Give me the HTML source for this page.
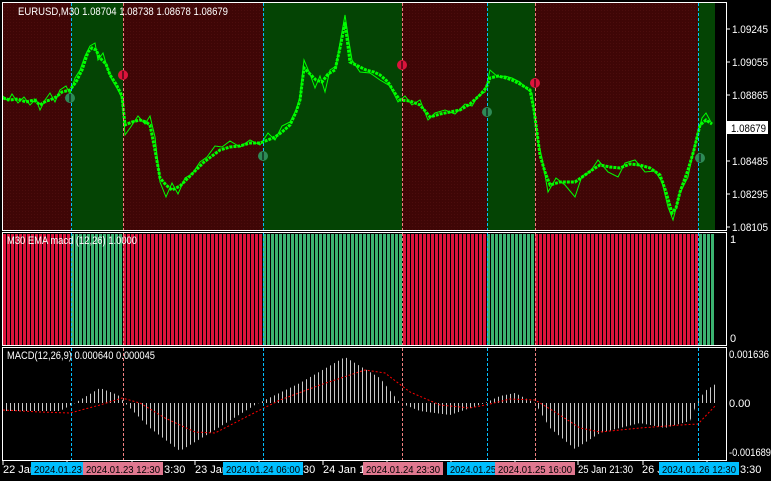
<!DOCTYPE html>
<html><head><meta charset="utf-8"><style>
html,body{margin:0;padding:0;background:#000;}
body{width:771px;height:481px;overflow:hidden;position:relative;}
svg{position:absolute;left:0;top:0;}
</style></head><body>
<svg width="771" height="481" xmlns="http://www.w3.org/2000/svg" font-family="Liberation Sans, sans-serif" font-size="11">
<defs>
<pattern id="dr" width="3" height="3" patternUnits="userSpaceOnUse"><rect width="3" height="3" fill="#3f0606"/><rect x="1" y="1" width="1" height="1" fill="#4c0d0d"/></pattern>
<pattern id="rb" x="3" width="4" height="10" patternUnits="userSpaceOnUse"><rect width="3" height="10" fill="#dc143c"/><rect x="3" width="1" height="10" fill="#000"/></pattern>
<pattern id="gb" x="3" width="4" height="10" patternUnits="userSpaceOnUse"><rect width="3" height="10" fill="#3cb371"/><rect x="3" width="1" height="10" fill="#000"/></pattern>
<pattern id="hb" x="1" width="4" height="10" patternUnits="userSpaceOnUse"><rect x="1" width="1" height="10" fill="#c8c8c8"/></pattern>
</defs>
<rect x="3" y="3" width="722" height="227" fill="#000"/>
<rect x="3" y="3" width="68" height="227" fill="url(#dr)"/>
<rect x="71" y="3" width="52" height="227" fill="#044404"/>
<rect x="123" y="3" width="140" height="227" fill="url(#dr)"/>
<rect x="263" y="3" width="139" height="227" fill="#044404"/>
<rect x="402" y="3" width="85" height="227" fill="url(#dr)"/>
<rect x="487" y="3" width="48" height="227" fill="#044404"/>
<rect x="535" y="3" width="163" height="227" fill="url(#dr)"/>
<rect x="698" y="3" width="17" height="227" fill="#044404"/>
<!-- price wicks -->
<polyline fill="none" stroke="#00ff00" stroke-width="1" points="3,96 8,101 12,94 18,103 24,97 30,105 36,99 40,110 45,100 50,93 55,102 60,90 66,86 70,94 75,78 80,70 85,56 90,46 95,43 98,60 103,53 108,70 112,80 118,90 122,98 125,135 130,128 138,116 145,124 150,116 155,137 160,182 166,197 172,183 178,194 185,178 192,174 200,162 207,157 215,146 222,147 230,141 240,147 250,140 260,145 268,133 275,140 282,126 290,122 296,110 300,97 304,60 310,74 315,88 320,76 325,92 330,70 336,66 340,43 345,15 349,42 352,60 360,72 370,73 380,80 390,86 398,102 405,96 412,105 420,100 428,120 435,113 445,110 455,114 465,104 472,106 478,96 485,92 490,70 498,77 505,76 512,78 520,82 528,90 532,93 538,142 542,158 548,192 556,178 565,185 575,197 582,176 590,172 598,160 608,172 618,177 625,163 635,160 645,172 655,171 662,182 668,207 673,220 680,193 688,177 694,148 698,133 702,118 706,113 712,124"/>
<!-- bodies -->
<polyline fill="none" stroke="#00ff00" stroke-width="3" stroke-dasharray="3,1" points="3,98 10,100 18,99 26,102 34,100 40,105 46,101 50,100 56,97 62,92 70,90 76,82 82,70 88,52 92,48 96,50 100,58 106,64 110,75 116,84 122,96 125,125 132,122 140,120 146,122 150,125 155,150 160,178 166,185 172,190 180,186 188,178 196,170 204,162 212,156 220,150 230,147 240,146 250,143 260,143 268,140 275,137 282,132 290,125 296,112 300,100 304,68 310,74 316,80 322,82 328,74 335,70 340,48 345,22 350,62 358,66 366,70 374,72 380,75 388,82 394,92 400,100 410,101 420,105 426,112 430,117 440,114 450,112 460,110 470,104 480,95 486,88 490,78 498,76 506,78 512,80 520,84 530,90 534,110 540,155 545,172 550,185 560,182 575,182 585,175 592,170 600,165 610,167 620,168 630,164 640,165 650,168 660,175 666,192 672,213 676,208 680,192 688,170 694,150 700,125 706,120 712,124"/>
<rect x="3" y="234" width="712" height="111" fill="#000"/>
<rect x="3" y="234" width="68" height="111" fill="url(#rb)"/>
<rect x="71" y="234" width="52" height="111" fill="url(#gb)"/>
<rect x="123" y="234" width="140" height="111" fill="url(#rb)"/>
<rect x="263" y="234" width="139" height="111" fill="url(#gb)"/>
<rect x="402" y="234" width="85" height="111" fill="url(#rb)"/>
<rect x="487" y="234" width="48" height="111" fill="url(#gb)"/>
<rect x="535" y="234" width="163" height="111" fill="url(#rb)"/>
<rect x="698" y="234" width="17" height="111" fill="url(#gb)"/>
<polygon fill="url(#hb)" fill-rule="evenodd" points="3,411 60,411 75,403 100,388 118,395 125,403 150,428 180,451 210,433 255,405 265,400 300,383 345,357 380,378 400,403 420,411 450,415 485,403 500,396 515,393 535,403 550,428 575,449 600,433 640,423 665,428 690,421 697,403 705,391 717,383 717,403 3,403"/>
<polyline fill="none" stroke="#ff0000" stroke-width="1" stroke-dasharray="2,2" points="3,410 40,412 70,413 100,405 122,398 140,403 165,418 195,432 215,433 250,415 280,400 320,385 365,370 385,373 410,392 440,405 470,408 490,404 510,399 535,400 555,412 580,428 600,432 640,428 680,425 698,424 716,405"/>
<g stroke-width="1" stroke-dasharray="3,2">
<line x1="71.5" y1="3" x2="71.5" y2="460" stroke="#00bfff"/>
<line x1="123.5" y1="3" x2="123.5" y2="460" stroke="#f08080"/>
<line x1="263.5" y1="3" x2="263.5" y2="460" stroke="#00bfff"/>
<line x1="402.5" y1="3" x2="402.5" y2="460" stroke="#f08080"/>
<line x1="487.5" y1="3" x2="487.5" y2="460" stroke="#00bfff"/>
<line x1="535.5" y1="3" x2="535.5" y2="460" stroke="#f08080"/>
<line x1="698.5" y1="3" x2="698.5" y2="460" stroke="#00bfff"/>
</g>
<g fill="none" stroke="#fff">
<rect x="2.5" y="2.5" width="724" height="228"/>
<rect x="2.5" y="232.5" width="724" height="113"/>
<rect x="2.5" y="347.5" width="724" height="113"/>
</g>
<g>
<circle cx="70" cy="98" r="5" fill="#2e8b57"/><circle cx="263" cy="156" r="5" fill="#2e8b57"/><circle cx="487" cy="112" r="5" fill="#2e8b57"/><circle cx="700" cy="158" r="5" fill="#2e8b57"/>
<circle cx="123" cy="75" r="5" fill="#dc143c"/><circle cx="402" cy="65" r="5" fill="#dc143c"/><circle cx="535" cy="83" r="5" fill="#dc143c"/>
</g>
<g stroke="#000" stroke-width="1">
<line x1="70" y1="94" x2="70" y2="102"/><line x1="263" y1="152" x2="263" y2="160"/><line x1="487" y1="108" x2="487" y2="116"/><line x1="700" y1="154" x2="700" y2="162"/>
<line x1="123" y1="71" x2="123" y2="79"/><line x1="402" y1="61" x2="402" y2="69"/><line x1="535" y1="79" x2="535" y2="87"/>
</g>
<g fill="#fff">
<text x="18" y="15" textLength="210" lengthAdjust="spacingAndGlyphs">EURUSD,M30  1.08704 1.08738 1.08678 1.08679</text>
<text x="7" y="244" textLength="130" lengthAdjust="spacingAndGlyphs">M30 EMA macd (12,26) 1.0000</text>
<text x="7" y="359" textLength="148" lengthAdjust="spacingAndGlyphs">MACD(12,26,9) 0.000640 0.000045</text>
<text x="732" y="33" textLength="36" lengthAdjust="spacingAndGlyphs">1.09245</text><text x="732" y="66" textLength="36" lengthAdjust="spacingAndGlyphs">1.09055</text><text x="732" y="99" textLength="36" lengthAdjust="spacingAndGlyphs">1.08865</text>
<text x="732" y="165" textLength="36" lengthAdjust="spacingAndGlyphs">1.08485</text><text x="732" y="198" textLength="36" lengthAdjust="spacingAndGlyphs">1.08295</text><text x="732" y="231" textLength="36" lengthAdjust="spacingAndGlyphs">1.08105</text>
<text x="730" y="243">1</text><text x="730" y="342">0</text>
<text x="729" y="358" textLength="40" lengthAdjust="spacingAndGlyphs">0.001636</text>
<text x="729" y="407">0.00</text>
<text x="729" y="456" textLength="42" lengthAdjust="spacingAndGlyphs">-0.001689</text>
</g>
<g stroke="#fff"><line x1="727" y1="29" x2="730" y2="29"/><line x1="727" y1="62" x2="730" y2="62"/><line x1="727" y1="95" x2="730" y2="95"/><line x1="727" y1="161" x2="730" y2="161"/><line x1="727" y1="194" x2="730" y2="194"/><line x1="727" y1="227" x2="730" y2="227"/></g>
<rect x="727" y="121" width="41" height="13" fill="#fff"/>
<text x="731" y="132" fill="#000" textLength="35" lengthAdjust="spacingAndGlyphs">1.08679</text>
<g stroke="#fff"><line x1="3" y1="461" x2="3" y2="465"/><line x1="67" y1="461" x2="67" y2="465"/><line x1="132" y1="461" x2="132" y2="465"/><line x1="195" y1="461" x2="195" y2="465"/><line x1="259" y1="461" x2="259" y2="465"/><line x1="323" y1="461" x2="323" y2="465"/><line x1="387" y1="461" x2="387" y2="465"/><line x1="451" y1="461" x2="451" y2="465"/><line x1="515" y1="461" x2="515" y2="465"/><line x1="578" y1="461" x2="578" y2="465"/><line x1="643" y1="461" x2="643" y2="465"/><line x1="707" y1="461" x2="707" y2="465"/></g>
<g fill="#fff">
<text x="3" y="473">22 Jan</text><text x="164" y="473">3:30</text><text x="195" y="473">23 Jan</text><text x="303" y="473">30</text>
<text x="323" y="473">24 Jan 13</text><text x="578" y="473" textLength="55" lengthAdjust="spacingAndGlyphs">25 Jan 21:30</text><text x="642" y="473">26 J</text><text x="740" y="473">3:30</text>
</g>
<g font-size="10.5">
<rect x="31" y="462" width="52" height="13" fill="#00bfff"/><text x="34" y="473" textLength="48" lengthAdjust="spacingAndGlyphs">2024.01.23</text>
<rect x="83" y="462" width="80" height="13" fill="#e07890"/><text x="86" y="473" textLength="74" lengthAdjust="spacingAndGlyphs">2024.01.23 12:30</text>
<rect x="223" y="462" width="80" height="13" fill="#00bfff"/><text x="226" y="473" textLength="74" lengthAdjust="spacingAndGlyphs">2024.01.24 06:00</text>
<rect x="363" y="462" width="80" height="13" fill="#e07890"/><text x="366" y="473" textLength="74" lengthAdjust="spacingAndGlyphs">2024.01.24 23:30</text>
<rect x="447" y="462" width="50" height="13" fill="#00bfff"/><text x="450" y="473" textLength="46" lengthAdjust="spacingAndGlyphs">2024.01.25</text>
<rect x="495" y="462" width="80" height="13" fill="#e07890"/><text x="498" y="473" textLength="74" lengthAdjust="spacingAndGlyphs">2024.01.25 16:00</text>
<rect x="659" y="462" width="80" height="13" fill="#00bfff"/><text x="662" y="473" textLength="74" lengthAdjust="spacingAndGlyphs">2024.01.26 12:30</text>
</g>
</svg>
</body></html>
